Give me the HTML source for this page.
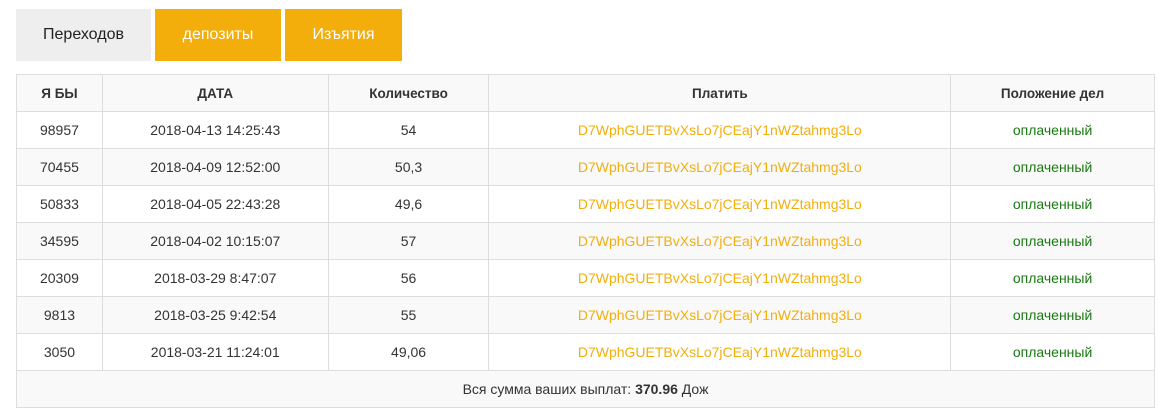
<!DOCTYPE html>
<html><head><meta charset="utf-8"><style>
*{box-sizing:border-box;margin:0;padding:0}
body{width:1159px;height:413px;background:#fff;font-family:"Liberation Sans","DejaVu Sans",sans-serif;font-size:14px;color:#333;position:relative}
.tab{position:absolute;top:9px;height:52px;line-height:52px;text-align:center;font-size:16px}
table{position:absolute;left:16px;top:74px;width:1139px;border-collapse:collapse}
td,th{border:1px solid #ddd;height:37px;text-align:center;padding:0}
th{font-weight:bold;font-size:13.5px}
tr.g td,tr.g th{background:#f9f9f9}
.o{color:#f3ae0c}.gr{color:#1a7a12}
</style></head><body>
<div class="tab" style="left:16px;width:135px;background:#eee;color:#222">Переходов</div>
<div class="tab" style="left:155px;width:126px;background:#f3ae0c;color:#fff">депозиты</div>
<div class="tab" style="left:285px;width:117px;background:#f3ae0c;color:#fff">Изъятия</div>
<table>
<colgroup><col style="width:86px"><col style="width:226px"><col style="width:161px"><col style="width:462px"><col style="width:204px"></colgroup>
<tr class="g"><th>Я БЫ</th><th>ДАТА</th><th>Количество</th><th>Платить</th><th>Положение дел</th></tr>
<tr><td>98957</td><td>2018-04-13 14:25:43</td><td>54</td><td class="o">D7WphGUETBvXsLo7jCEajY1nWZtahmg3Lo</td><td class="gr">оплаченный</td></tr>
<tr class="g"><td>70455</td><td>2018-04-09 12:52:00</td><td>50,3</td><td class="o">D7WphGUETBvXsLo7jCEajY1nWZtahmg3Lo</td><td class="gr">оплаченный</td></tr>
<tr><td>50833</td><td>2018-04-05 22:43:28</td><td>49,6</td><td class="o">D7WphGUETBvXsLo7jCEajY1nWZtahmg3Lo</td><td class="gr">оплаченный</td></tr>
<tr class="g"><td>34595</td><td>2018-04-02 10:15:07</td><td>57</td><td class="o">D7WphGUETBvXsLo7jCEajY1nWZtahmg3Lo</td><td class="gr">оплаченный</td></tr>
<tr><td>20309</td><td>2018-03-29 8:47:07</td><td>56</td><td class="o">D7WphGUETBvXsLo7jCEajY1nWZtahmg3Lo</td><td class="gr">оплаченный</td></tr>
<tr class="g"><td>9813</td><td>2018-03-25 9:42:54</td><td>55</td><td class="o">D7WphGUETBvXsLo7jCEajY1nWZtahmg3Lo</td><td class="gr">оплаченный</td></tr>
<tr><td>3050</td><td>2018-03-21 11:24:01</td><td>49,06</td><td class="o">D7WphGUETBvXsLo7jCEajY1nWZtahmg3Lo</td><td class="gr">оплаченный</td></tr>
<tr class="g"><td colspan="5">Вся сумма ваших выплат: <b>370.96</b> Дож</td></tr>
</table>
</body></html>
